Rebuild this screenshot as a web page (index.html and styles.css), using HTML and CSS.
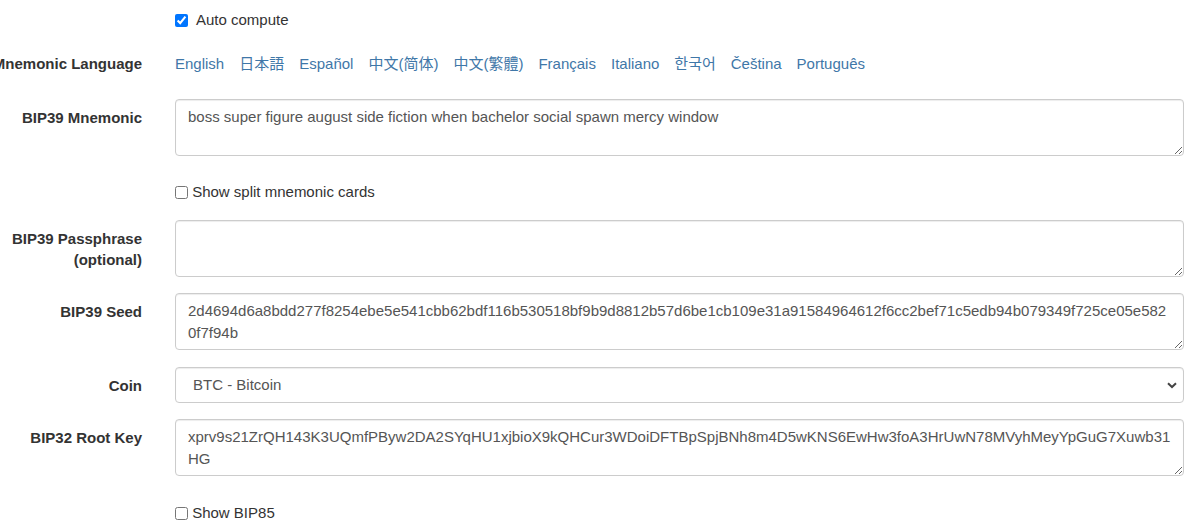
FILE: index.html
```html
<!DOCTYPE html>
<html lang="en">
<head>
<meta charset="utf-8">
<title>BIP39</title>
<link rel="stylesheet" href="styles.css">
</head>
<body>
<form class="form">
  <div class="row row-auto">
    <div class="label"></div>
    <label class="check check-auto"><input type="checkbox" checked>Auto compute</label>
  </div>
  <div class="row row-lang">
    <div class="label nowrap"><span>Mnemonic Language</span></div>
    <div class="langs">
      <a href="#">English</a>
      <a href="#">日本語</a>
      <a href="#">Español</a>
      <a href="#" class="sc">中文(简体)</a>
      <a href="#" class="tc">中文(繁體)</a>
      <a href="#">Français</a>
      <a href="#">Italiano</a>
      <a href="#" class="kr">한국어</a>
      <a href="#">Čeština</a>
      <a href="#">Português</a>
    </div>
  </div>
  <div class="row row-mnemonic">
    <div class="label"><span>BIP39 Mnemonic</span></div>
    <textarea class="control" rows="2">boss super figure august side fiction when bachelor social spawn mercy window</textarea>
  </div>
  <div class="row row-split">
    <div class="label"></div>
    <label class="check"><input type="checkbox"> Show split mnemonic cards</label>
  </div>
  <div class="row row-pass">
    <div class="label"><span>BIP39 Passphrase (optional)</span></div>
    <textarea class="control" rows="2"></textarea>
  </div>
  <div class="row row-seed">
    <div class="label"><span>BIP39 Seed</span></div>
    <textarea class="control" rows="2">2d4694d6a8bdd277f8254ebe5e541cbb62bdf116b530518bf9b9d8812b57d6be1cb109e31a91584964612f6cc2bef71c5edb94b079349f725ce05e5820f7f94b</textarea>
  </div>
  <div class="row row-coin">
    <div class="label"><span>Coin</span></div>
    <div class="select-wrap">
      <select class="control select">
        <option>BTC - Bitcoin</option>
      </select>
      <svg class="chevron" width="10" height="7" viewBox="0 0 10 7"><path d="M1 1.2 L5 5 L9 1.2" fill="none" stroke="#444" stroke-width="2"/></svg>
    </div>
  </div>
  <div class="row row-root">
    <div class="label"><span>BIP32 Root Key</span></div>
    <textarea class="control" rows="2">xprv9s21ZrQH143K3UQmfPByw2DA2SYqHU1xjbioX9kQHCur3WDoiDFTBpSpjBNh8m4D5wKNS6EwHw3foA3HrUwN78MVyhMeyYpGuG7Xuwb31HG</textarea>
  </div>
  <div class="row row-bip85">
    <div class="label"></div>
    <label class="check"><input type="checkbox"> Show BIP85</label>
  </div>
</form>
</body>
</html>
```
FILE: styles.css
```css
html, body {
  margin: 0;
  padding: 0;
  background: #fff;
  overflow: hidden;
}
body {
  font-family: "Liberation Sans", Arial, sans-serif;
  font-size: 15px;
  color: #333;
}
.form {
  padding-top: 10px;
  padding-right: 16px;
}
.row {
  display: grid;
  grid-template-columns: 142px 1fr;
  column-gap: 33px;
  align-items: start;
}
.label {
  display: flex;
  justify-content: flex-end;
  text-align: right;
  font-weight: bold;
  line-height: 21px;
  padding-top: 8px;
  min-width: 0;
}
.label.nowrap {
  white-space: nowrap;
  padding-top: 0;
  line-height: 20px;
}
.check {
  display: flex;
  align-items: center;
  line-height: 20px;
  height: 20px;
  white-space: pre;
}
.check input {
  width: 13px;
  height: 13px;
  margin: 0;
}
.check-auto {
  gap: 8px;
}
.row-auto .label,
.row-split .label,
.row-bip85 .label {
  padding-top: 0;
}
.row-lang { margin-top: 24px; }
.row-mnemonic { margin-top: 25px; }
.row-split { margin-top: 26px; }
.row-pass { margin-top: 18px; }
.row-seed { margin-top: 16px; }
.row-coin { margin-top: 17px; }
.row-root { margin-top: 16px; }
.row-bip85 { margin-top: 27px; }

.langs {
  display: flex;
  gap: 15px;
  line-height: 20px;
  white-space: nowrap;
}
.langs a {
  color: #3f77a8;
  text-decoration: none;
  font-family: "Liberation Sans", Arial, "Noto Sans CJK JP", sans-serif;
}
.langs a.sc { font-family: "Liberation Sans", Arial, "Noto Sans CJK SC", sans-serif; }
.langs a.tc { font-family: "Liberation Sans", Arial, "Noto Sans CJK TC", sans-serif; }
.langs a.kr { font-family: "Liberation Sans", Arial, "Noto Sans CJK KR", sans-serif; }

.control {
  display: block;
  box-sizing: border-box;
  width: 100%;
  margin: 0;
  border: 1px solid #ccc;
  border-radius: 4px;
  background: #fff;
  color: #555;
  font-family: "Liberation Sans", Arial, sans-serif;
  font-size: 15px;
  box-shadow: inset 0 1px 1px rgba(0,0,0,.075);
}
textarea.control {
  height: 57px;
  padding: 6px 12px;
  line-height: 22px;
  resize: vertical;
  overflow: hidden;
  word-break: break-all;
}
.select-wrap {
  position: relative;
}
.select {
  -webkit-appearance: none;
  appearance: none;
  height: 36px;
  padding: 0 30px 0 17px;
  line-height: 20px;
}
.chevron {
  position: absolute;
  right: 7px;
  top: 15px;
  pointer-events: none;
}
```
